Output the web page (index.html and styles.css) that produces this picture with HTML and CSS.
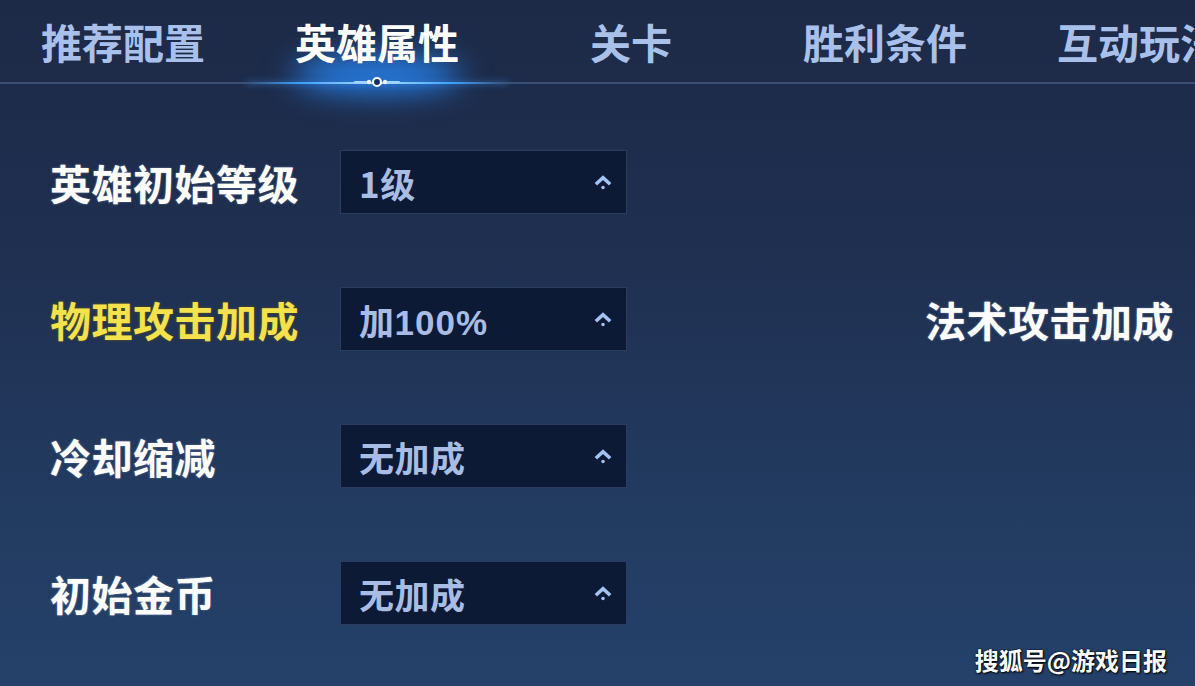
FILE: index.html
```html
<!DOCTYPE html>
<html lang="zh-CN">
<head>
    <meta charset="UTF-8">
    <meta name="viewport" content="width=device-width, initial-scale=1.0">
    <title>英雄属性</title>
    <link rel="stylesheet" href="styles.css">
</head>
<body>
    <div class="tabs">
        <div class="tab">推荐配置</div>
        <div class="tab active">
            <span class="glow"></span>
            <span class="tab-text">英雄属性</span>
            <svg class="marker" viewBox="0 0 48 12">
                <path d="M2 6 H16" stroke="#9fd4ff" stroke-width="2" stroke-linecap="round"/>
                <path d="M32 6 H46" stroke="#9fd4ff" stroke-width="2" stroke-linecap="round"/>
                <circle cx="16" cy="6" r="2.2" fill="#e6f4ff"/>
                <circle cx="32" cy="6" r="2.2" fill="#e6f4ff"/>
                <circle cx="24" cy="6" r="4" fill="#15305a" stroke="#f2f8ff" stroke-width="2.2"/>
            </svg>
        </div>
        <div class="tab">关卡</div>
        <div class="tab">胜利条件</div>
        <div class="tab">互动玩法</div>
    </div>

    <div class="settings">
        <div class="label">英雄初始等级</div>
        <div class="select"><span class="value">1级</span><svg class="caret" viewBox="0 0 20 18"><path d="M3.5 11 L10 5 L16.5 11"/><circle cx="10" cy="14" r="1.6"/></svg></div>
        <div class="spacer"></div>

        <div class="label highlight">物理攻击加成</div>
        <div class="select"><span class="value">加<b>100%</b></span><svg class="caret" viewBox="0 0 20 18"><path d="M3.5 11 L10 5 L16.5 11"/><circle cx="10" cy="14" r="1.6"/></svg></div>
        <div class="label side">法术攻击加成</div>

        <div class="label">冷却缩减</div>
        <div class="select"><span class="value">无加成</span><svg class="caret" viewBox="0 0 20 18"><path d="M3.5 11 L10 5 L16.5 11"/><circle cx="10" cy="14" r="1.6"/></svg></div>
        <div class="spacer"></div>

        <div class="label">初始金币</div>
        <div class="select"><span class="value">无加成</span><svg class="caret" viewBox="0 0 20 18"><path d="M3.5 11 L10 5 L16.5 11"/><circle cx="10" cy="14" r="1.6"/></svg></div>
        <div class="spacer"></div>
    </div>

    <div class="watermark">搜狐号@游戏日报</div>
</body>
</html>
```

FILE: styles.css
```css
body { margin: 0; width: 1195px; height: 686px; overflow: hidden; position: relative; font-family: "Noto Sans CJK SC", "Noto Sans", sans-serif; font-weight: 700; background: linear-gradient(180deg, #1d2a47 0%, #1f2f50 35%, #223a5f 70%, #25416a 100%); color: #fff; }

/* tab strip */
.tabs { display: flex; margin-left: -4px; height: 82px; border-bottom: 2px solid #3b4f72; white-space: nowrap; }
.tab { flex: 0 0 254px; text-align: center; font-size: 41px; line-height: 40px; padding-top: 21px; color: #a9c1ea; position: relative; }
.tab.active { color: #fff; }
.tab-text { position: relative; z-index: 1; }
/* soft blue light behind the active tab */
.glow { position: absolute; left: 42px; top: 56px; width: 170px; height: 36px; border-radius: 50%; background: rgba(40, 140, 255, 0.9); filter: blur(15px); }
/* lit line under the active tab */
.tab.active::before { content: ""; position: absolute; left: -4px; right: -4px; bottom: -2px; height: 2px; z-index: 1;
    background: linear-gradient(90deg, rgba(60, 160, 255, 0), #3ea2ff 22%, #b0e0ff 50%, #3ea2ff 78%, rgba(60, 160, 255, 0));
    box-shadow: 0 0 6px rgba(60, 150, 255, 0.7); }
.marker { position: absolute; left: 103px; top: 76px; width: 48px; height: 12px; z-index: 2; }

/* settings grid */
.settings { display: grid; grid-template-columns: 290px 287px 1fr; row-gap: 73px; padding: 66px 0 0 50px; align-items: center; }
.label { font-size: 41px; line-height: 64px; letter-spacing: 0.5px; color: #fff; text-shadow: 0 0 2px rgba(200, 220, 255, 0.5); }
.label.highlight { color: #f3e24c; text-shadow: 0 0 3px rgba(120, 100, 0, 0.7); }
.label.side { padding-left: 298px; }
.select { height: 62px; background: #0c1a35; border: 1px solid #2b3d5f; display: flex; align-items: center; justify-content: space-between; padding: 0 12px 0 18px; }
.value { font-size: 35px; color: #a9bde4; letter-spacing: 0.5px; }
.value b { font-family: "Liberation Sans", Arial, sans-serif; letter-spacing: 1px; }
.caret { width: 22px; height: 20px; fill: #a4c2f2; }
.caret path { fill: none; stroke: #a4c2f2; stroke-width: 3.2; stroke-linejoin: miter; }

.watermark { position: absolute; right: 28px; bottom: 12px; font-size: 24px; line-height: 28px; color: #fff; text-shadow: 1px 1px 2px #000, 0 0 2px #000; }
```
